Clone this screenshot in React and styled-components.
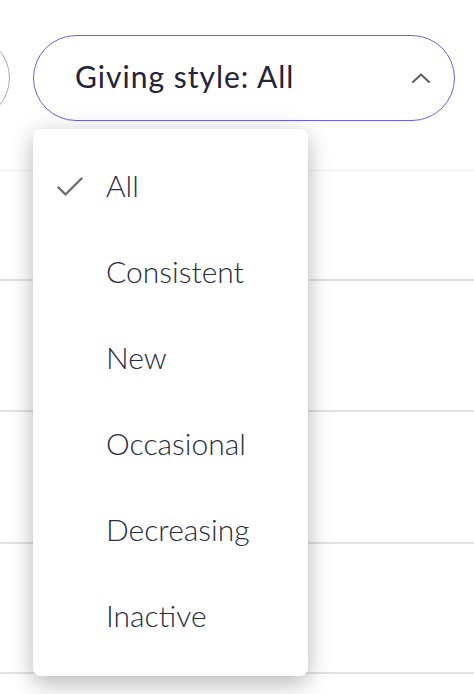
import React from "react";
import styled, { createGlobalStyle } from "styled-components";

const Global = createGlobalStyle`
  html, body { margin: 0; padding: 0; background: #ffffff; }
  body { overflow: hidden; font-family: Lato, "Noto Sans", sans-serif; color: #25253a; }
  * { box-sizing: border-box; }
`;

const Page = styled.div`
  position: relative;
  width: 474px;
  height: 694px;
  overflow: hidden;
`;

const Toolbar = styled.div`
  display: flex;
  gap: 23px;
  padding-top: 35px;
  margin-left: -150px;
`;

const Pill = styled.button`
  flex: none;
  display: flex;
  align-items: center;
  justify-content: space-between;
  width: ${(p) => p.$w}px;
  height: 86px;
  padding: 0 24px 0 41px;
  border-radius: 43px;
  background: #fff;
  border: 1px solid ${(p) => (p.$active ? "#6a63e4" : "#a9a9ae")};
  font-family: inherit;
  font-size: 30px;
  font-weight: 400;
  letter-spacing: 1px;
  color: #23233a;
  cursor: pointer;
`;

const PillLabel = styled.span`
  margin-top: -4px;
`;

const Table = styled.div`
  margin-top: 49px;
  border-top: 1px solid #efeff0;
`;

const Row = styled.div`
  height: ${(p) => p.$h}px;
  border-bottom: 2px solid #e2e2e4;
`;

const Menu = styled.ul`
  position: absolute;
  top: 129px;
  left: 33px;
  width: 275px;
  margin: 0;
  padding: 16px 0 15px;
  list-style: none;
  background: #fff;
  border-radius: 8px;
  box-shadow: 0 10px 22px rgba(0, 0, 0, 0.2), 0 0 26px rgba(0, 0, 0, 0.1);
`;

const Item = styled.li`
  display: flex;
  align-items: center;
  height: 86px;
  padding-left: 24px;
  padding-bottom: 6px;
  font-size: 30px;
  font-weight: 300;
  letter-spacing: 0;
  color: #2b2b40;
`;

const CheckSlot = styled.span`
  display: flex;
  align-items: center;
  width: 49px;
  flex: none;
  margin-top: 4px;
`;

const Check = () => (
  <svg width="26" height="20" viewBox="0 0 26 20" fill="none">
    <path d="M1.5 10.5 L8.5 17.5 L24.5 1.5" stroke="#6c6c74" strokeWidth="2.4" strokeLinecap="round" strokeLinejoin="round" />
  </svg>
);

const ChevronUp = () => (
  <svg width="18" height="10" viewBox="0 0 18 10" fill="none">
    <path d="M1 9 L9 1.5 L17 9" stroke="#5f5f68" strokeWidth="2" strokeLinecap="round" strokeLinejoin="round" />
  </svg>
);

const options = ["All", "Consistent", "New", "Occasional", "Decreasing", "Inactive"];
const rows = [110, 131, 132, 130, 131];

export default function App() {
  return (
    <Page>
      <Global />
      <Toolbar>
        <Pill $w={160}>
          <PillLabel />
        </Pill>
        <Pill $w={422} $active>
          <PillLabel>Giving style: All</PillLabel>
          <ChevronUp />
        </Pill>
      </Toolbar>
      <Table>
        {rows.map((h, i) => (
          <Row key={i} $h={h} />
        ))}
      </Table>
      <Menu>
        {options.map((o, i) => (
          <Item key={o}>
            <CheckSlot>{i === 0 && <Check />}</CheckSlot>
            {o}
          </Item>
        ))}
      </Menu>
    </Page>
  );
}
